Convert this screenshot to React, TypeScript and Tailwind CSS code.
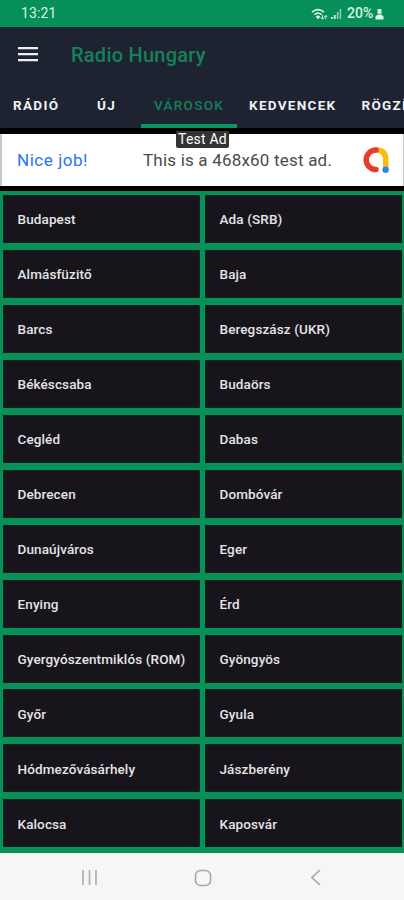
const cities = [
  "Budapest", "Ada (SRB)", "Almásfüzitő", "Baja", "Barcs", "Beregszász (UKR)",
  "Békéscsaba", "Budaörs", "Cegléd", "Dabas", "Debrecen", "Dombóvár",
  "Dunaújváros", "Eger", "Enying", "Érd", "Gyergyószentmiklós (ROM)", "Gyöngyös",
  "Győr", "Gyula", "Hódmezővásárhely", "Jászberény", "Kalocsa", "Kaposvár",
];

function StatusBar() {
  return (
    <div className="flex h-[27px] shrink-0 items-center bg-[#078f59] pl-[21px] text-[#d8f5e4]">
      <span className="w-[290px] text-[14px] leading-[27px] tracking-[0.1px]">13:21</span>
      <svg width="17" height="13" viewBox="0 0 17 13" className="mt-px" fill="none" stroke="currentColor">
        <path d="M1 4.2Q7 -.8 13 4.2" strokeWidth="1.7" />
        <path d="M3.4 6.7Q7 3.6 10.6 6.7" strokeWidth="1.6" />
        <path d="M5 8.6 7 11 9 8.6Q7 7 5 8.6" fill="currentColor" strokeWidth=".6" />
        <path d="M11.5 7v4M9.8 9.3l1.7 2 1.7-2M14.8 11V7.5M13.4 9l1.4-1.6L16.2 9" strokeWidth=".9" />
      </svg>
      <svg width="12" height="12" viewBox="0 0 12 12" className="ml-[2px] mt-px" fill="currentColor">
        <path d="M1 9h1.7v2H1zM3.9 7h1.7v4H3.9z" />
        <path d="M6.8 4h1.7v7H6.8zM9.7 1h1.5v10H9.7z" opacity=".65" />
      </svg>
      <span className="ml-[5px] w-[28px] text-[14px] font-medium leading-[27px]">20%</span>
      <svg width="9" height="12" viewBox="0 0 9 12" className="mt-px" fill="currentColor">
        <path d="M2.5 1h4v4.8h-4zM.5 8.2Q4.5 4.5 8.5 8.2V11.5H.5z" />
      </svg>
    </div>
  );
}

function Header() {
  return (
    <header className="flex h-[101px] shrink-0 flex-col bg-[#1d2330]">
      <div className="flex h-[57px] items-center pl-[18px]">
        <svg width="20" height="16" viewBox="0 0 20 16" className="mr-[33px] mt-[-4px]" fill="#eeeef1">
          <path d="M0 1h20v2.3H0zM0 7h20v2.3H0zM0 13h20v2.3H0z" />
        </svg>
        <h1 className="mt-[-2px] text-[20px] font-medium leading-6 tracking-[0.25px] text-[#148259]">Radio Hungary</h1>
      </div>
      <nav className="flex h-[44px] overflow-hidden whitespace-nowrap text-[13.5px] font-bold leading-[42px] tracking-[1.3px] text-[#f0f1f3]">
        <span className="w-[84px] shrink-0 pl-[13px]">RÁDIÓ</span>
        <span className="w-[57px] shrink-0 pl-[13px]">ÚJ</span>
        <span className="w-[96px] shrink-0 border-b-4 border-[#079660] pl-[13px] font-medium text-[#148259]">VÁROSOK</span>
        <span className="w-[112px] shrink-0 pl-[12px]">KEDVENCEK</span>
        <span className="shrink-0 pl-[12.5px]">RÖGZÍTÉS</span>
      </nav>
    </header>
  );
}

function AdBanner() {
  return (
    <div className="relative h-[63px] shrink-0 bg-black pb-[5px] pt-[6px]">
      <div className="flex h-[52px] items-center border-l-2 border-r border-[#c9c9c9] bg-white pl-[15px]">
        <span className="w-[126px] pt-px text-[17px] tracking-[0.55px] text-[#2874ee]">Nice job!</span>
        <span className="w-[219px] whitespace-nowrap pt-px text-[17px] tracking-[0.2px] text-[#4b4b4b]">This is a 468x60 test ad.</span>
        <svg width="28" height="28" viewBox="0 0 28 28" fill="none" strokeWidth="5.5" strokeLinecap="round">
          <path d="M14 4Q23.7 4 23.7 13.7V23" stroke="#fbbc09" />
          <path d="M14 4A9.8 9.8 0 1 0 14 23.6" stroke="#e63d30" />
          <circle cx="23.6" cy="23.8" r="3.2" fill="#3384ed" />
        </svg>
      </div>
      <div className="absolute left-[176px] top-[3px] h-[17px] w-[53px] rounded-b-[2px] bg-[#333] text-center text-[14px] leading-[17px] tracking-[0.2px] text-white">Test Ad</div>
    </div>
  );
}

function CityGrid() {
  return (
    <main className="h-[662px] shrink-0 bg-[#079058] px-[3px] pt-[4px]">
      <div className="grid grid-cols-[197px_197px] gap-x-[5px] gap-y-[6.94px]">
        {cities.map((city) => (
          <div key={city} className="flex h-[48px] items-center border border-[#0b241c] bg-[#17151b] pl-[13.5px] pt-px text-[13.5px] font-medium tracking-[0.12px] text-[#e4e4e7]">
            <span className="whitespace-nowrap">{city}</span>
          </div>
        ))}
      </div>
    </main>
  );
}

function NavigationBar() {
  return (
    <div className="flex h-[47px] shrink-0 items-center bg-[#f6f6f6] pl-[81px] pt-[2px]">
      <svg width="17" height="17" viewBox="0 0 17 17" fill="none" stroke="#b0b0b0" strokeWidth="1.7">
        <path d="M2 1v15M8.5 1v15M15 1v15" />
      </svg>
      <svg width="18" height="18" viewBox="0 0 18 18" className="ml-[96px]" fill="none" stroke="#a8a8a8" strokeWidth="1.6">
        <rect x="1.5" y="1.5" width="15" height="15" rx="5" />
      </svg>
      <svg width="10" height="17" viewBox="0 0 10 17" className="ml-[99px]" fill="none" stroke="#a8a8a8" strokeWidth="1.6">
        <path d="M9 1 1 8.5l8 7.5" />
      </svg>
    </div>
  );
}

export default function App() {
  return (
    <div className="flex h-[900px] w-[404px] flex-col overflow-hidden font-[Roboto,sans-serif]">
      <StatusBar />
      <Header />
      <AdBanner />
      <CityGrid />
      <NavigationBar />
    </div>
  );
}
